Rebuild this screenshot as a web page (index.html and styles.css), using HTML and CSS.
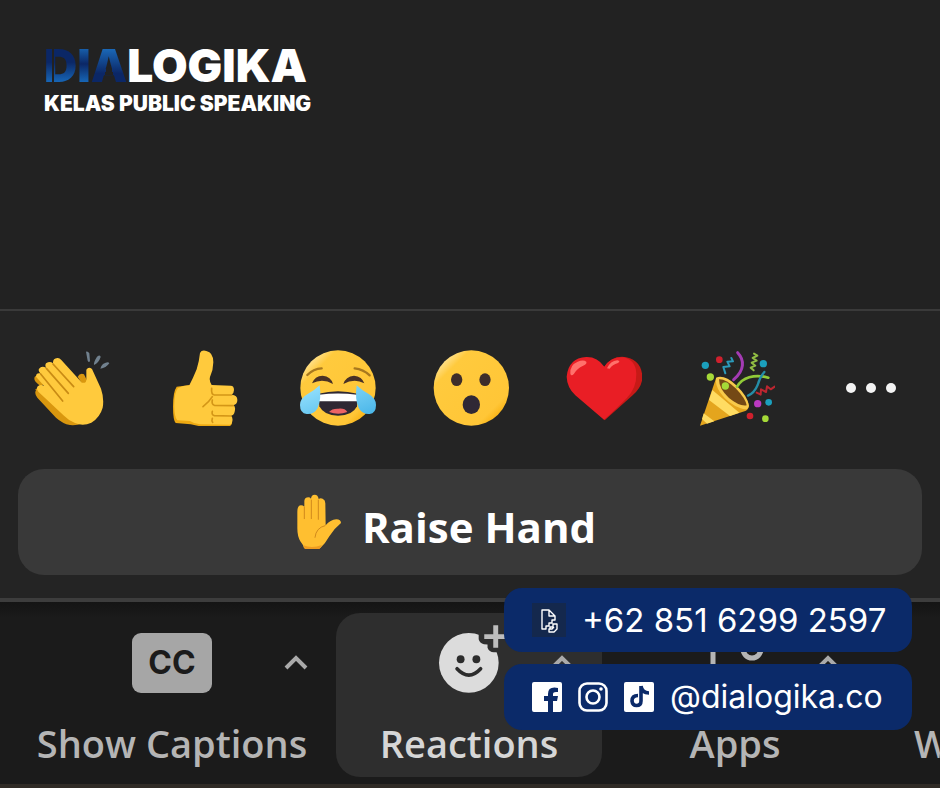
FILE: index.html
```html
<!DOCTYPE html>
<html lang="id">
<head>
<meta charset="utf-8">
<meta name="viewport" content="width=device-width, initial-scale=1">
<title>Dialogika – Raise Hand</title>
<link rel="stylesheet" href="styles.css">
</head>
<body>
<header class="header">
  <div class="logo"><span class="d">D</span><span class="i">I</span><span class="a">A</span>LOGIKA</div>
  <div class="tagline">KELAS PUBLIC SPEAKING</div>
</header>

<main class="panel">
  <div class="reactions">
    <button class="reaction" aria-label="Clap">
      <svg viewBox="42 45 228 228">
        <path fill="#d9970f" d="M45 165 L62 150 L215 245 Q185 274 150 270 Q128 266 108 248 L52 188 Q42 176 48 165Z"/>
        <path fill="#d9970f" d="M43 130 Q44 120 58 122 L80 145 L60 152 Q42 140 43 130Z M173 125 Q180 113 192 118 L205 145 L190 152Z"/>
        <path fill="#ffca3d" d="M64 118 Q50 106 60 98 Q68 92 78 98 Q72 84 84 82 Q92 79 99 85 Q98 70 112 69 Q118 68 124 75 L186 143 Q198 146 199 134 L199 104 Q206 93 216 102 L243 161 Q253 190 248 218 Q240 247 214 263 Q189 275 165 264 Q148 258 132 242 L55 170 Q45 156 58 151 Q66 148 73 154 L48 125 Q48 113 60 115Z"/>
        <path fill="none" stroke="#c98b14" stroke-width="5" stroke-linecap="round" d="M99 87 L161 155 M79 100 L145 175 M62 117 L128 198"/>
        <path fill="#71818e" d="M198 50 Q203 47 208 55 L210 78 Q207 84 203 77Z M231 65 Q241 57 242 66 Q236 84 222 90 Q220 83 231 65Z M249 87 Q265 78 268 85 Q258 99 241 101 Q241 95 249 87Z"/>
      </svg>
    </button>
    <button class="reaction" aria-label="Thumbs up">
      <svg viewBox="441 45 228 228">
        <path fill="#eda912" d="M470 155 Q459 170 459 215 Q459 255 467 264 L512 268 L536 273 L630 273 Q638 270 636 250 L510 150Z"/>
        <path fill="#ffca3d" d="M474 159 Q490 151 508 151 Q519 130 530 103 Q538 76 540 54 Q545 44 559 48 Q580 52 580 82 Q580 104 570 126 Q567 139 575 150 L632 152 Q642 152 642 165 Q642 174 635 179 Q653 180 652 196 Q652 208 640 211 Q648 215 644 230 Q642 240 633 242 Q639 246 637 258 Q636 269 628 269 L540 268 Q525 268 510 258 L472 256 Q463 246 463 215 Q462 175 474 159Z"/>
        <path fill="none" stroke="#d49617" stroke-width="5" stroke-linecap="round" stroke-linejoin="round" d="M635 180 L583 180 Q573 178 575 160 M640 212 L583 211 Q574 208 577 195 M633 243 L583 242 Q574 240 577 229 M577 185 Q568 200 549 215 M578 262 Q574 258 577 250"/>
      </svg>
    </button>
    <button class="reaction" aria-label="Tears of joy">
      <svg viewBox="60 45 228 228">
        <defs><linearGradient id="face" x1="0" y1="0" x2="1" y2="1"><stop offset=".1" stop-color="#ffe9a8"/><stop offset=".24" stop-color="#ffca3d"/><stop offset=".78" stop-color="#ffc637"/><stop offset=".92" stop-color="#f3a600"/></linearGradient>
        <linearGradient id="tear" x1="0" y1="0" x2="1" y2="1"><stop offset="0" stop-color="#9be4ff"/><stop offset="1" stop-color="#48b5e8"/></linearGradient></defs>
        <circle cx="174" cy="159" r="113" fill="url(#face)"/>
        <path fill="none" stroke="#a8781e" stroke-width="7" stroke-linecap="round" d="M82 120 Q100 101 125 100 M224 100 Q250 103 269 121"/>
        <path fill="#493126" d="M96 145 Q104 123 128 122 Q153 124 159 147 Q128 129 96 145Z M190 147 Q197 124 222 122 Q246 124 253 145 Q223 129 190 147Z"/>
        <path fill="#2f2833" d="M115 176 Q174 161 233 176 L231 214 Q218 242 174 242 Q132 242 118 214Z"/>
        <path fill="#fff" d="M117 179 Q174 172 231 179 L231 199 L117 199Z"/>
        <path fill="#ed6365" d="M147 231 Q156 220 175 221 Q195 219 202 231 Q175 242 147 231Z"/>
        <path fill="url(#tear)" d="M119 151 Q125 193 113 219 Q102 239 80 237 Q60 235 60 210 Q60 190 83 177 Q105 165 119 151Z M230 151 Q224 193 236 219 Q248 239 269 237 Q288 235 288 210 Q288 190 266 177 Q244 165 230 151Z"/>
      </svg>
    </button>
    <button class="reaction" aria-label="Surprised">
      <svg viewBox="459 45 228 228">
        <circle cx="574" cy="159" r="113" fill="url(#face)"/>
        <ellipse cx="530" cy="134" rx="17" ry="19" fill="#3e2d2a"/><ellipse cx="615" cy="134" rx="17" ry="19" fill="#3e2d2a"/>
        <ellipse cx="574" cy="209" rx="26" ry="28" fill="#302835"/>
      </svg>
    </button>
    <button class="reaction" aria-label="Heart">
      <svg viewBox="48 45 228 228">
        <path fill="#c61a17" d="M164 94 Q183 65 216 65 Q277 70 277 130 Q275 157 248 181 L164 256 L120 200Z"/>
        <path fill="#e91e25" d="M163 95 Q142 65 109 66 Q55 69 50 125 Q51 157 76 181 L162 254 Q205 216 231 188 Q260 158 259 116 Q257 76 222 67 Q182 65 163 95Z"/>
        <path fill="#ff716b" d="M61 116 Q59 90 83 80 Q100 73 109 80 Q112 87 98 93 Q83 99 72 116 Q64 126 61 116Z M171 100 Q181 78 202 76 Q213 78 204 84 Q187 89 179 101Z"/>
      </svg>
    </button>
    <button class="reaction" aria-label="Celebrate">
      <svg viewBox="447 45 228 228">
        <path fill="#e4a51d" d="M498 130 L450 272 L588 227 Q599 221 595 205Z"/>
        <path fill="#ffdc62" d="M487 165 L477 195 L540 243 L568 233Z M461 235 L456 252 L471 266 L493 259Z"/>
        <path fill="#f8ca4a" d="M498 128 Q523 118 558 150 Q593 184 597 212 Q594 229 572 220 Q533 205 511 173 Q495 151 498 128Z"/>
        <path fill="#744915" d="M507 133 Q528 132 557 160 Q586 190 590 211 Q569 215 537 189 Q507 162 507 133Z"/>
        <g fill="none" stroke-linecap="round" stroke-linejoin="round">
          <path stroke="#a43bb4" stroke-width="9" d="M563 53 C584 75 584 106 551 134"/>
          <path stroke="#91cb38" stroke-width="8" d="M561 155 C577 128 612 116 655 128"/>
          <path stroke="#258da7" stroke-width="7" d="M643 111 Q629 127 623 150 Q613 174 594 182"/>
          <path stroke="#2b9aba" stroke-width="6" d="M544 69 L549 79 L532 80 L539 94 L520 96 L526 115"/>
          <path stroke="#91bd43" stroke-width="6" d="M612 56 L622 62 L608 69 L620 77 L605 83 L616 92 L602 98 L611 106"/>
          <path stroke="#bd2630" stroke-width="6" d="M620 173 L632 179 L633 163 L648 171 L651 154 L662 163 L674 155"/>
        </g>
        <g fill="#1ba0bd"><circle cx="466" cy="91" r="11"/><circle cx="640" cy="86" r="11"/><circle cx="656" cy="202" r="10"/></g>
        <g fill="#cf202d"><circle cx="508" cy="74" r="10"/><circle cx="600" cy="243" r="10"/></g>
        <g fill="#a5d938"><circle cx="481" cy="126" r="11"/><circle cx="526" cy="153" r="11"/><circle cx="646" cy="251" r="10"/></g>
        <circle cx="623" cy="206" r="11" fill="#ba39c1"/>
      </svg>
    </button>
    <button class="reaction" aria-label="More reactions">
      <svg viewBox="0 0 76 76" fill="#f4f4f4"><circle cx="19" cy="38" r="5"/><circle cx="39" cy="38" r="5"/><circle cx="59" cy="38" r="5"/></svg>
    </button>
  </div>
  <button class="raise">
    <svg class="hand" viewBox="45 42 138 168" aria-hidden="true">
      <path fill="#ffbf30" d="M49 95 Q49 76 60 76 Q66 76 70 80 L70 62 Q72 52 82 52 Q87 52 90 56 Q91 44 101 44 Q111 44 113 57 Q118 53 125 56 Q133 60 133 70 L134 136 Q148 119 166 118 Q180 119 180 129 Q160 145 145 169 Q133 191 118 204 L69 204 Q67 195 58 184 Q49 169 49 145Z"/>
      <path fill="none" stroke="#d18a1c" stroke-width="3" stroke-linecap="round" d="M70 82 V116 M91 60 V116 M112 60 V118 M132 137 Q105 143 102 172"/>
      <path fill="#ee9c20" d="M67 196 Q93 207 123 195 L116 207 L71 207Z"/>
    </svg>
    <span>Raise Hand</span>
  </button>
</main>

<footer class="toolbar">
  <div class="item">
    <button class="tool"><span class="cc">CC</span><span>Show Captions</span></button>
    <button class="chevron" aria-label="Caption options"><svg viewBox="0 0 24 16"><path d="M2 13 L12 3 L22 13"/></svg></button>
  </div>
  <div class="item active">
    <button class="tool">
      <svg class="icon" viewBox="327 129 183 183" aria-hidden="true">
        <defs><mask id="bite"><rect x="320" y="90" width="200" height="230" fill="#fff"/><path d="M448 118 V148 Q451 160 464 163 L475 164 V174 Q480 187 494 188 H520 V118Z" fill="#000"/></mask></defs>
        <circle cx="418" cy="220" r="91" fill="#dcdcdc" mask="url(#bite)"/>
        <path d="M500 105 V174 M465 140 H535" stroke="#bdbdbd" stroke-width="15"/>
        <circle cx="393" cy="209" r="12" fill="#2c2c2c"/><circle cx="441" cy="209" r="12" fill="#2c2c2c"/>
        <path d="M382 238 Q418 277 454 238" fill="none" stroke="#2c2c2c" stroke-width="11" stroke-linecap="round"/>
      </svg>
      <span>Reactions</span>
    </button>
    <button class="chevron" aria-label="Reaction options"><svg viewBox="0 0 24 16"><path d="M2 13 L12 3 L22 13"/></svg></button>
  </div>
  <div class="item">
    <button class="tool">
      <svg class="icon" viewBox="0 0 60 60" fill="none" stroke="#b5b5b5" stroke-width="5" aria-hidden="true"><path d="M8 8 V54 H52 V38 M8 8 H28"/><circle cx="47" cy="16" r="9"/></svg>
      <span>Apps</span>
    </button>
    <button class="chevron" aria-label="App options"><svg viewBox="0 0 24 16"><path d="M2 13 L12 3 L22 13"/></svg></button>
  </div>
  <div class="item last"><button class="tool"><span>W</span></button></div>

  <aside class="contacts">
    <a class="contact phone" href="tel:+6285162992597">
      <svg class="file" viewBox="0 0 34 34" aria-hidden="true"><rect width="34" height="34" fill="#14284d"/><path fill="none" stroke="#fff" stroke-width="1.4" stroke-linejoin="round" d="M14 26 H10 V7 H17 L23 13 V17 H20 V20 H17 V23 H14Z M17 7 V13 H23 M18 26 V24 H21 V21 H25 V26 L22 29 H17 V26 H20 L22 24"/></svg>
      <span>+62 851 6299 2597</span>
    </a>
    <a class="contact handle" href="#dialogika">
      <svg class="social" viewBox="0 0 30 30" aria-hidden="true"><path fill="#fff" d="M2 0 H28 Q30 0 30 2 V28 Q30 30 28 30 H21 V19 H25 L26 14 H21 V12 Q21 10 24 10 H26 V6 Q16 4 16 12 V14 H12 V19 H16 V30 H2 Q0 30 0 28 V2 Q0 0 2 0Z"/></svg>
      <svg class="social insta" viewBox="0 0 30 30" fill="none" stroke="#fff" stroke-width="2.6" aria-hidden="true"><rect x="1.5" y="1.5" width="27" height="27" rx="7.5"/><circle cx="15" cy="15" r="6.5"/><circle cx="23" cy="7" r="1.8" fill="#fff" stroke="none"/></svg>
      <svg class="social" viewBox="0 0 30 30" aria-hidden="true"><rect width="30" height="30" rx="2" fill="#fff"/><path fill="none" stroke="#0b2a69" stroke-width="3.6" d="M14 13.5 Q8 13.5 8 19 Q8.500 23.500 12.500 23.500 Q17 23.500 17 19 V4 M17 4 Q18 11 25 11"/></svg>
      <span>@dialogika.co</span>
    </a>
  </aside>
</footer>
</body>
</html>
```
FILE: styles.css
```css
* { box-sizing: border-box; }

body {
  margin: 0;
  min-height: 100vh;
  display: flex;
  flex-direction: column;
  overflow-x: hidden;
  background: #222;
  color: #fff;
  font-family: "Open Sans", "Noto Sans", sans-serif;
}

button {
  margin: 0;
  padding: 0;
  border: 0;
  background: none;
  color: inherit;
  font: inherit;
}

svg { display: block; }

.header {
  flex: 1;
  padding: 40px 44px;
  font-family: Inter, sans-serif;
  font-weight: 900;
  white-space: nowrap;
}

.logo { font-size: 46px; line-height: 50px; }

.logo span {
  color: transparent;
  background-clip: text;
  -webkit-background-clip: text;
}

.logo .d {
  background-image: linear-gradient(90deg, transparent 8px, #222 8px, #222 10px, transparent 10px), linear-gradient(#0b2766 45%, #1765b5 80%);
}

.logo .i { background-image: linear-gradient(#1861ae 20%, #0b2766 48%, #1765b5 80%); }

.logo .a {
  background-image: conic-gradient(from 163deg at 50% 42%, #222 34deg, transparent 0), linear-gradient(#1b6ab9 20%, #0b2766 65%);
}

.tagline { font-size: 21px; line-height: 28px; }

.panel {
  padding: 39px 18px 23px;
  background: #242424;
  border-top: 2px solid #3a3a3a;
  border-bottom: 4px solid #3d3d3d;
}

.reactions {
  display: grid;
  grid-template-columns: repeat(7, 1fr);
  margin: 0 -14px 43px -13px;
}

.reaction { display: flex; justify-content: center; }
.reaction svg { width: 76px; height: 76px; }

.raise {
  display: flex;
  align-items: center;
  justify-content: center;
  gap: 20px;
  width: 100%;
  padding: 24px 48px 24px 0;
  border-radius: 26px;
  background: #393939;
  font-size: 42px;
  font-weight: 700;
  line-height: 58px;
}

.raise span { padding-top: 10px; line-height: 48px; }
.hand { width: 46px; height: 56px; }

.toolbar {
  position: relative;
  display: grid;
  grid-template-columns: 328fr 266fr 266fr 72fr;
  padding: 11px 0 7px 8px;
  background: linear-gradient(#141414, #1b1b1b 16px);
  border-bottom: 4px solid #302b26;
}

.item {
  display: grid;
  padding: 20px 0 4px;
  border-radius: 24px;
  color: #b5b5b5;
}

.item > * { grid-area: 1 / 1; }
.active { background: #2e2e2e; color: #d6d6d6; }

.tool {
  display: flex;
  flex-direction: column;
  align-items: center;
  justify-content: flex-end;
  gap: 20px;
  font-size: 38px;
  font-weight: 600;
  line-height: 60px;
  white-space: nowrap;
}

.icon { width: 60px; height: 60px; overflow: visible; }

.cc {
  width: 80px;
  border-radius: 9px;
  background: #a6a6a6;
  color: #1b1b1b;
  font: 700 32px/60px Inter, sans-serif;
}

.last { overflow: hidden; }
.last .tool { align-items: flex-start; padding-left: 46px; }

.chevron {
  align-self: start;
  justify-self: end;
  margin: 22px 28px 0 0;
}

.chevron svg { width: 24px; height: 16px; }
.chevron path { fill: none; stroke: #aaa; stroke-width: 4; }

.contacts {
  position: absolute;
  right: 28px;
  bottom: 54px;
  display: flex;
  flex-direction: column;
  gap: 12px;
  font-family: Inter, sans-serif;
}

.contact {
  display: flex;
  align-items: center;
  min-width: 408px;
  padding: 0 24px 0 28px;
  border-radius: 18px;
  background: #0b2a69;
  color: #fff;
  text-decoration: none;
  white-space: nowrap;
}

.phone { gap: 16px; font-size: 33px; line-height: 64px; }
.handle { gap: 16px; font-size: 32px; line-height: 66px; }
.file { width: 34px; height: 34px; }
.social { width: 30px; height: 30px; }
```
